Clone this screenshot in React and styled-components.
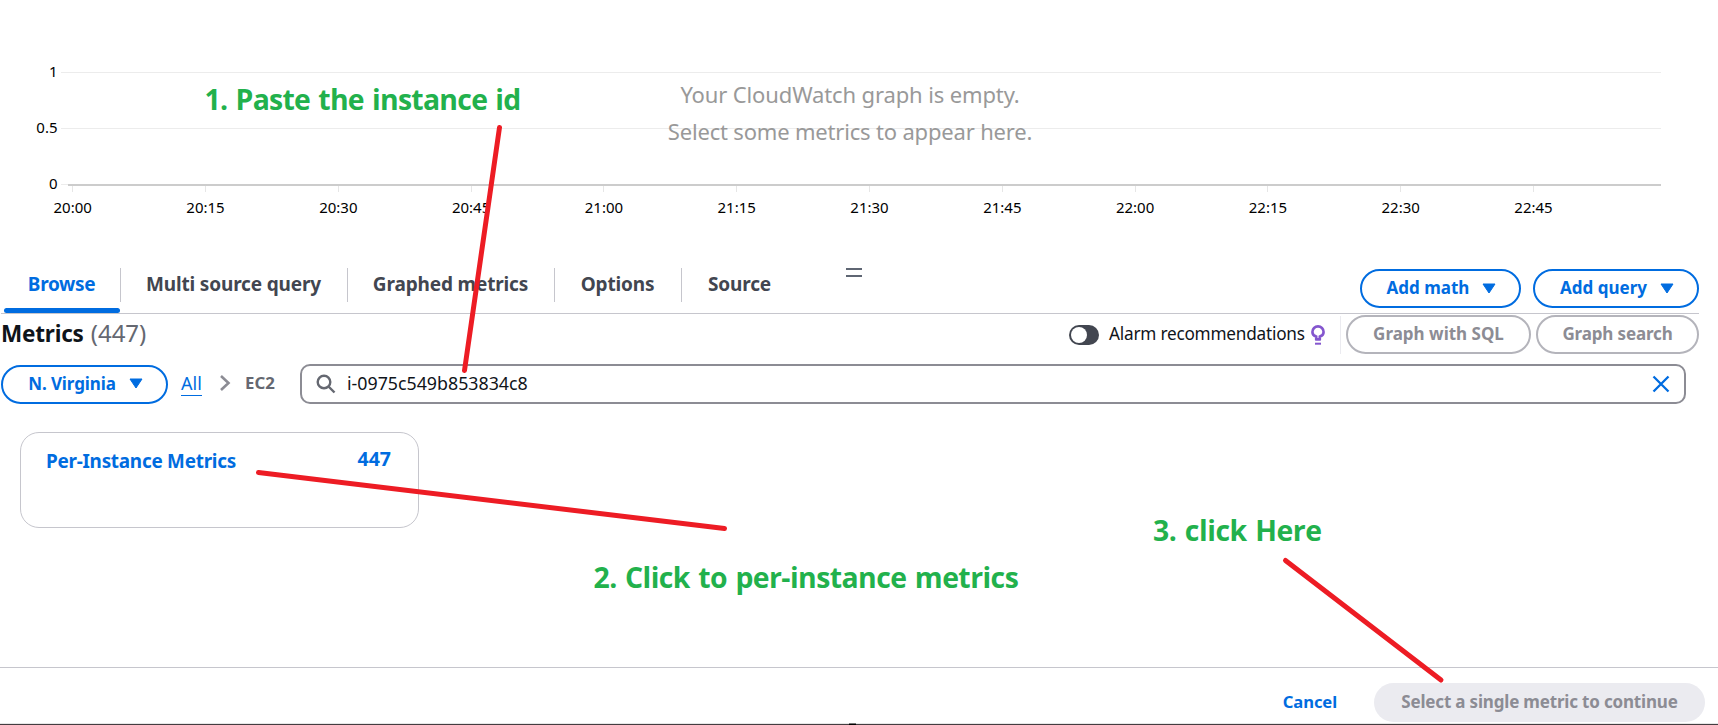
import React from 'react';
import styled, { createGlobalStyle } from 'styled-components';

const GlobalStyle = createGlobalStyle`
  * { box-sizing: border-box; }
  body { margin: 0; background: #fff; overflow: hidden; }
`;

const Page = styled.div`
  position: relative;
  display: flex;
  flex-direction: column;
  width: 1718px;
  height: 725px;
  overflow: hidden;
  background: #fff;
  color: #0f141a;
  font-family: 'Noto Sans', 'Open Sans', sans-serif;
  white-space: nowrap;
`;

/* Graph */
const Graph = styled.section`
  position: relative;
  height: 268px;
`;

const GraphSvg = styled.svg`
  display: block;
  text { font-family: 'Noto Sans', sans-serif; font-size: 15px; fill: #000; }
`;

const EmptyMessage = styled.div`
  position: absolute;
  top: 76px;
  left: 600px;
  width: 500px;
  text-align: center;
  font-size: 22px;
  line-height: 37px;
  color: #999;
`;

const EmptyLine = styled.div`
  letter-spacing: ${(p) => p.$spacing}px;
`;

/* Tabs */
const TabBar = styled.nav`
  position: relative;
  display: flex;
  justify-content: space-between;
  height: 46px;
  margin: 0 19px 0 1px;
  border-bottom: 1px solid #c6c6cd;
`;

const TabList = styled.div`
  display: flex;
  padding-left: 3px;
`;

const Tab = styled.div`
  position: relative;
  width: ${(p) => p.$width}px;
  height: 34px;
  padding: 0 1px 2px 0;
  line-height: 32px;
  text-align: center;
  font-size: 19px;
  font-weight: 700;
  letter-spacing: ${(p) => p.$spacing ?? -0.15}px;
  color: ${(p) => (p.$active ? '#006ce0' : '#424650')};
  & + & { border-left: 1px solid #c6c6cd; }
`;

const ActiveMark = styled.span`
  position: absolute;
  left: 0;
  top: 40px;
  width: 116px;
  height: 5px;
  border-radius: 3px;
  background: #006ce0;
`;

const DragHandle = styled.span`
  position: absolute;
  left: 845px;
  top: 0;
  width: 16px;
  height: 9px;
  border: solid #5f6673;
  border-width: 2.5px 0;
`;

const Actions = styled.div`
  display: flex;
  gap: 12px;
  padding-top: 1px;
`;

const Button = styled.button`
  display: flex;
  align-items: center;
  justify-content: center;
  gap: 13px;
  width: ${(p) => p.$width}px;
  height: 39px;
  padding: 0 0 1px ${(p) => p.$shift ?? 0}px;
  border: 2px solid ${(p) => (p.$muted ? '#b4b4bb' : '#006ce0')};
  border-radius: 20px;
  background: #fff;
  font: 700 17px/30px 'Noto Sans', sans-serif;
  letter-spacing: ${(p) => p.$spacing ?? 0}px;
  color: ${(p) => (p.$muted ? '#8c8c94' : '#006ce0')};
`;

/* Metrics header */
const Header = styled.div`
  display: flex;
  justify-content: space-between;
  height: 39px;
  margin: 1px 19px 0 1px;
`;

const Title = styled.h2`
  margin: 0;
  font-size: 22.5px;
  font-weight: 700;
  line-height: 35px;
  letter-spacing: -0.2px;
`;

const Count = styled.span`
  margin-left: 7px;
  font-size: 24px;
  font-weight: 400;
  letter-spacing: 0;
  color: #656871;
`;

const Controls = styled.div`
  display: flex;
  align-items: center;
`;

const Toggle = styled.span`
  width: 30px;
  height: 20px;
  padding: 2px;
  margin-right: 10px;
  border-radius: 10px;
  background: #424650;
`;

const Knob = styled.span`
  display: block;
  width: 16px;
  height: 16px;
  border-radius: 50%;
  background: #fff;
`;

const ToggleLabel = styled.span`
  width: 202px;
  padding-bottom: 2px;
  font-size: 17.2px;
  line-height: 36px;
  letter-spacing: -0.22px;
`;

const Separator = styled.span`
  width: 1px;
  height: 38px;
  margin: 0 5px 0 15px;
  background: #ebebf0;
`;

const ButtonPair = styled.div`
  display: flex;
  gap: 5px;
`;

/* Filter */
const FilterRow = styled.div`
  display: flex;
  align-items: center;
  height: 40px;
  margin: 10px 32px 0 1px;
`;

const Crumbs = styled.div`
  display: flex;
  align-items: center;
  width: 132px;
  padding: 0 0 2px 13px;
`;

const CrumbLink = styled.a`
  width: 21px;
  border-bottom: 1.5px solid #006ce0;
  font-size: 18px;
  line-height: 24px;
  color: #006ce0;
`;

const CrumbCurrent = styled.span`
  margin-left: 14px;
  font-size: 16.8px;
  font-weight: 700;
  line-height: 24px;
  color: #656871;
`;

const ChevronSvg = styled.svg`
  margin-left: 17px;
`;

const SearchBox = styled.div`
  display: flex;
  flex: 1;
  align-items: center;
  height: 40px;
  padding: 0 14px 0 13.5px;
  border: 2px solid #8c8c94;
  border-radius: 10px;
`;

const SearchText = styled.span`
  flex: 1;
  margin-left: 11.5px;
  padding-bottom: 1px;
  font-size: 17.8px;
  line-height: 35px;
`;

/* Card */
const Content = styled.main`
  flex: 1;
  padding: 28px 20px 0;
`;

const Card = styled.div`
  display: flex;
  justify-content: space-between;
  width: 399px;
  height: 96px;
  padding: 13px 27px 0 25px;
  border: 1px solid #c6c6cd;
  border-radius: 19px;
  font-size: 18.9px;
  font-weight: 700;
  line-height: 28px;
  color: #006ce0;
`;

const CardName = styled.span`
  padding-top: 1px;
  letter-spacing: -0.25px;
`;

const CardCount = styled.span`
  margin-top: -1px;
  font-size: 19.5px;
`;

/* Footer */
const Footer = styled.footer`
  position: relative;
  display: flex;
  justify-content: flex-end;
  align-items: flex-start;
  gap: 37px;
  height: 58px;
  padding: 15px 13px 0 0;
  border-top: 1px solid #c6c6cd;
`;

const Cancel = styled.span`
  font-size: 16.6px;
  font-weight: 700;
  line-height: 37px;
  letter-spacing: -0.1px;
  color: #006ce0;
`;

const Submit = styled.button`
  width: 331px;
  height: 39px;
  padding: 0 0 1px;
  border: 0;
  border-radius: 20px;
  background: #ebebf0;
  font: 700 17px/30px 'Noto Sans', sans-serif;
  letter-spacing: -0.18px;
  color: #8c8c94;
`;

const BottomEdge = styled.span`
  position: absolute;
  left: 0;
  bottom: 0;
  width: 100%;
  height: 2px;
  border-top: 1px solid #e6e6e6;
  background: #443d40;
`;

const BottomMark = styled.span`
  position: absolute;
  left: 849px;
  bottom: 0;
  width: 7px;
  height: 2px;
  border-top: 1px solid #777;
  background: #000;
`;

/* Annotations drawn over the page */
const Strokes = styled.svg`
  position: absolute;
  left: 0;
  top: 0;
  pointer-events: none;
`;

const Note = styled.div`
  position: absolute;
  left: ${(p) => p.$x}px;
  top: ${(p) => p.$y}px;
  font: 700 28.4px/30px 'Open Sans', 'Noto Sans', sans-serif;
  letter-spacing: ${(p) => p.$spacing}px;
  word-spacing: 1.5px;
  color: #22b14c;
`;

const times = ['20:00', '20:15', '20:30', '20:45', '21:00', '21:15', '21:30', '21:45', '22:00', '22:15', '22:30', '22:45'];
const levels = [['1', 72], ['0.5', 128], ['0', 184]];

const Caret = () => (
  <svg width="14" height="11" viewBox="0 0 14 11">
    <path d="M1 1h12L7 10z" fill="#006ce0" stroke="#006ce0" strokeWidth="1" strokeLinejoin="round" />
  </svg>
);

function GraphArea() {
  return (
    <Graph>
      <GraphSvg width="1718" height="268">
        {levels.map(([label, y]) => (
          <g key={label}>
            <rect x="61" y={y} width="1600" height="1" fill="#ececec" />
            <text x="57.5" y={y + 5.4} textAnchor="end">{label}</text>
          </g>
        ))}
        <rect x="68" y="184" width="1593" height="2" fill="#ccc" />
        {times.map((t, i) => {
          const x = 72.7 + i * 132.8;
          return (
            <g key={t}>
              <rect x={Math.floor(x)} y="186" width="1" height="6" fill="#e6e6e6" />
              <text x={x} y="213" textAnchor="middle">{t}</text>
            </g>
          );
        })}
      </GraphSvg>
      <EmptyMessage>
        <EmptyLine $spacing={-0.13}>Your CloudWatch graph is empty.</EmptyLine>
        <EmptyLine $spacing={-0.18}>Select some metrics to appear here.</EmptyLine>
      </EmptyMessage>
    </Graph>
  );
}

export default function App() {
  return (
    <Page>
      <GlobalStyle />
      <GraphArea />
      <TabBar>
        <TabList>
          <Tab $width={116} $active $spacing={-0.35}>Browse<ActiveMark /></Tab>
          <Tab $width={227}>Multi source query</Tab>
          <Tab $width={207}>Graphed metrics</Tab>
          <Tab $width={127}>Options</Tab>
          <Tab $width={117}>Source</Tab>
        </TabList>
        <DragHandle />
        <Actions>
          <Button $width={161} $shift={2}>Add math<Caret /></Button>
          <Button $width={166} $shift={2}>Add query<Caret /></Button>
        </Actions>
      </TabBar>
      <Header>
        <Title>Metrics<Count>(447)</Count></Title>
        <Controls>
          <Toggle><Knob /></Toggle>
          <ToggleLabel>Alarm recommendations</ToggleLabel>
          <svg width="14" height="20" viewBox="0 0 14 20" fill="none" stroke="#8456ce" strokeWidth="2.6">
            <path d="M5.200 15v-3.400C2.900 10.900 1.400 9.300 1.400 7a5.600 5.600 0 0 1 11.200 0c0 2.300-1.500 3.900-3.800 4.600V15M4.200 14.400h5.600" />
            <path d="M4 18.700h6" strokeWidth="2" />
          </svg>
          <Separator />
          <ButtonPair>
            <Button $width={185} $muted>Graph with SQL</Button>
            <Button $width={163} $muted $spacing={-0.15}>Graph search</Button>
          </ButtonPair>
        </Controls>
      </Header>
      <FilterRow>
        <Button $width={167} $spacing={-0.1} $shift={2}>N. Virginia<Caret /></Button>
        <Crumbs>
          <CrumbLink>All</CrumbLink>
          <ChevronSvg width="12" height="18" viewBox="0 0 12 18" fill="none" stroke="#8c8c94" strokeWidth="2.600">
            <path d="M2 2l7.500 7L2 16" />
          </ChevronSvg>
          <CrumbCurrent>EC2</CrumbCurrent>
        </Crumbs>
        <SearchBox>
          <svg width="20" height="20" viewBox="0 0 20 20" fill="none" stroke="#656871" strokeWidth="2.400">
            <circle cx="8" cy="8" r="6.300" />
            <path d="M12.500 12.500l6 6" />
          </svg>
          <SearchText>i-0975c549b853834c8</SearchText>
          <svg width="18" height="18" viewBox="0 0 18 18" fill="none" stroke="#006ce0" strokeWidth="2.300">
            <path d="M1.500 1.500l15 15M16.500 1.500l-15 15" />
          </svg>
        </SearchBox>
      </FilterRow>
      <Content>
        <Card>
          <CardName>Per-Instance Metrics</CardName>
          <CardCount>447</CardCount>
        </Card>
      </Content>
      <Footer>
        <Cancel>Cancel</Cancel>
        <Submit>Select a single metric to continue</Submit>
        <BottomEdge />
        <BottomMark />
      </Footer>
      <Strokes width="1718" height="725" stroke="#ed1c24" strokeWidth="5" strokeLinecap="round">
        <path d="M499.500 127.500L464.500 370.500" />
        <path d="M258.500 472.500L724.500 528.500" />
        <path d="M1285.500 560.500L1441 680" />
      </Strokes>
      <Note $x={204.5} $y={84} $spacing={-0.72}>1. Paste the instance id</Note>
      <Note $x={593.5} $y={562} $spacing={-0.55}>2. Click to per-instance metrics</Note>
      <Note $x={1153} $y={515} $spacing={-0.45}>3. click Here</Note>
    </Page>
  );
}
